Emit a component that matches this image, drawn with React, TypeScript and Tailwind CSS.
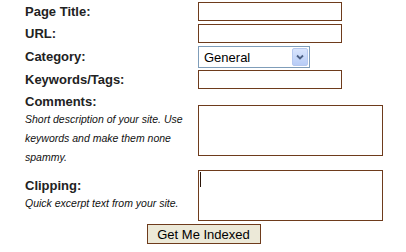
import React from 'react';

const labelCls = "w-[173px] shrink-0 text-[13px] font-bold text-[#222] leading-[16px]";
const hintCls = "text-[10.5px] font-normal italic text-[#111] leading-[19px]";
const boxCls = "w-[144px] h-[19px] border border-[#6e3b1c] bg-white";

function Row({ label, children, className = '' }: { label: string; children: React.ReactNode; className?: string }) {
  return (
    <div className={`flex items-center ${className}`}>
      <div className={labelCls}>{label}</div>
      {children}
    </div>
  );
}

function SelectBox() {
  return (
    <div className="w-[112px] h-[22px] border border-[#7f9db9] bg-white flex items-center justify-between">
      <span className="pl-[5px] text-[13px] text-black leading-none">General</span>
      <div className="w-[16px] h-[18px] mr-[1px] rounded-[2px] border border-[#b5c8ef] bg-gradient-to-b from-[#d9e5fd] to-[#b7ccf6] flex items-center justify-center">
        <svg width="8" height="6" viewBox="0 0 8 6">
          <path d="M1 1.5 L4 4.5 L7 1.5" fill="none" stroke="#4d6185" strokeWidth="1.8" />
        </svg>
      </div>
    </div>
  );
}

export default function App() {
  return (
    <div className="w-[406px] h-[252px] bg-white font-['Liberation_Sans',Arial,sans-serif] overflow-hidden">
      <div className="pl-[25px] pt-[2px]">
        <Row label="Page Title:">
          <div className={boxCls} />
        </Row>
        <Row label="URL:" className="mt-[3px]">
          <div className={boxCls} />
        </Row>
        <Row label="Category:" className="mt-[3px]">
          <SelectBox />
        </Row>
        <Row label="Keywords/Tags:" className="mt-[2px]">
          <div className={boxCls} />
        </Row>

        {/* Comments */}
        <div className="flex items-center mt-[5px]">
          <div className={labelCls}>
            <div>Comments:</div>
            <div className={hintCls}>
              Short description of your site. Use<br />
              keywords and make them none<br />
              spammy.
            </div>
          </div>
          <div className="w-[185px] h-[51px] border border-[#6e3b1c] bg-white" />
        </div>

        {/* Clipping */}
        <div className="flex items-center mt-[3px]">
          <div className={labelCls}>
            <div>Clipping:</div>
            <div className={hintCls}>Quick excerpt text from your site.</div>
          </div>
          <div className="relative w-[185px] h-[51px] border border-[#6e3b1c] bg-white">
            <div className="absolute left-[1px] top-[1px] w-[1px] h-[15px] bg-[#2a1408]" />
          </div>
        </div>
      </div>

      <div className="flex justify-center mt-[3px]">
        <button className="w-[114px] h-[20px] ml-[1px] border border-[#6e3b1c] bg-[#ece9d8] text-[13px] text-black leading-none">
          Get Me Indexed
        </button>
      </div>
    </div>
  );
}
